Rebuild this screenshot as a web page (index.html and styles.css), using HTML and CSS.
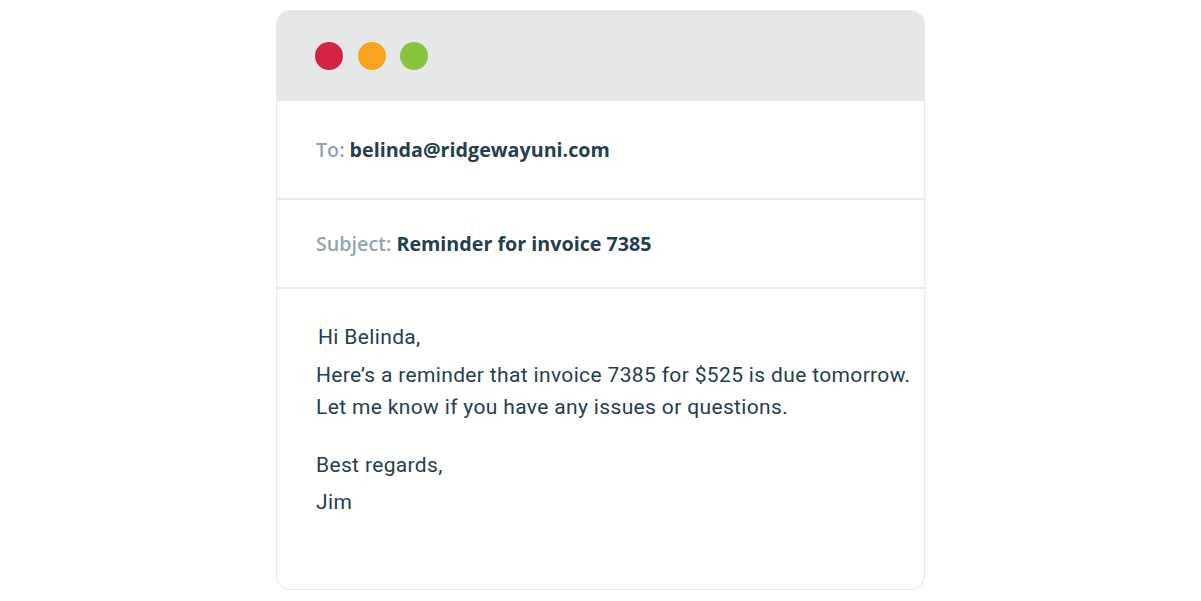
FILE: index.html
```html
<!DOCTYPE html>
<html lang="en">
<head>
    <meta charset="UTF-8">
    <meta name="viewport" content="width=device-width, initial-scale=1.0">
    <title>Invoice reminder</title>
    <link rel="stylesheet" href="styles.css">
</head>
<body>
    <div class="mail">
        <div class="mail-bar">
            <span class="dot red"></span>
            <span class="dot orange"></span>
            <span class="dot green"></span>
        </div>
        <div class="mail-row to-row">
            <span class="label">To:</span> <b>belinda@ridgewayuni.com</b>
        </div>
        <div class="mail-row subject-row">
            <span class="label">Subject:</span> <b>Reminder for invoice 7385</b>
        </div>
        <div class="mail-body">
            <p class="greet">Hi Belinda,</p>
            <p>Here’s a reminder that invoice 7385 for $525 is due tomorrow.<br>Let me know if you have any issues or questions.</p>
            <p class="sign">Best regards,<br>Jim</p>
        </div>
    </div>
</body>
</html>
```

FILE: styles.css
```css
body {
    margin: 0;
    background: #fff;
    font-family: "Open Sans", Lato, sans-serif;
    color: #23404f;
}
.mail {
    width: 647px;
    height: 578px;
    margin: 10px auto 0;
    border: 1px solid #e6e8ea;
    border-radius: 14px;
    overflow: hidden;
}
.mail-bar {
    height: 90px;
    background: #e6e7e9;
    display: flex;
    align-items: center;
    gap: 14.5px;
    padding-left: 38px;
}
.dot {
    width: 28px;
    height: 28px;
    border-radius: 50%;
}
.red { background: #d32443; }
.orange { background: #f9a51f; }
.green { background: #87c540; }
.mail-row {
    padding-left: 39px;
    font-size: 19.7px;
    display: flex;
    align-items: center;
    border-bottom: 2px solid #e8eaeb;
}
.to-row { height: 97px; }
.subject-row { height: 87px; }
.label {
    color: #93a4b1;
    font-weight: 600;
    margin-right: 5px;
}
.mail-row b {
    font-weight: 700;
}
.mail-body {
    padding: 32px 39px 0;
    font-family: Roboto, Lato, sans-serif;
    font-size: 21px;
    letter-spacing: 0.35px;
    white-space: nowrap;
}
.mail-body p {
    margin: 0 0 6px;
    line-height: 32px;
}
.greet { padding-left: 2px; }
.mail-body .sign {
    margin-top: 24px;
    line-height: 37px;
}
```
